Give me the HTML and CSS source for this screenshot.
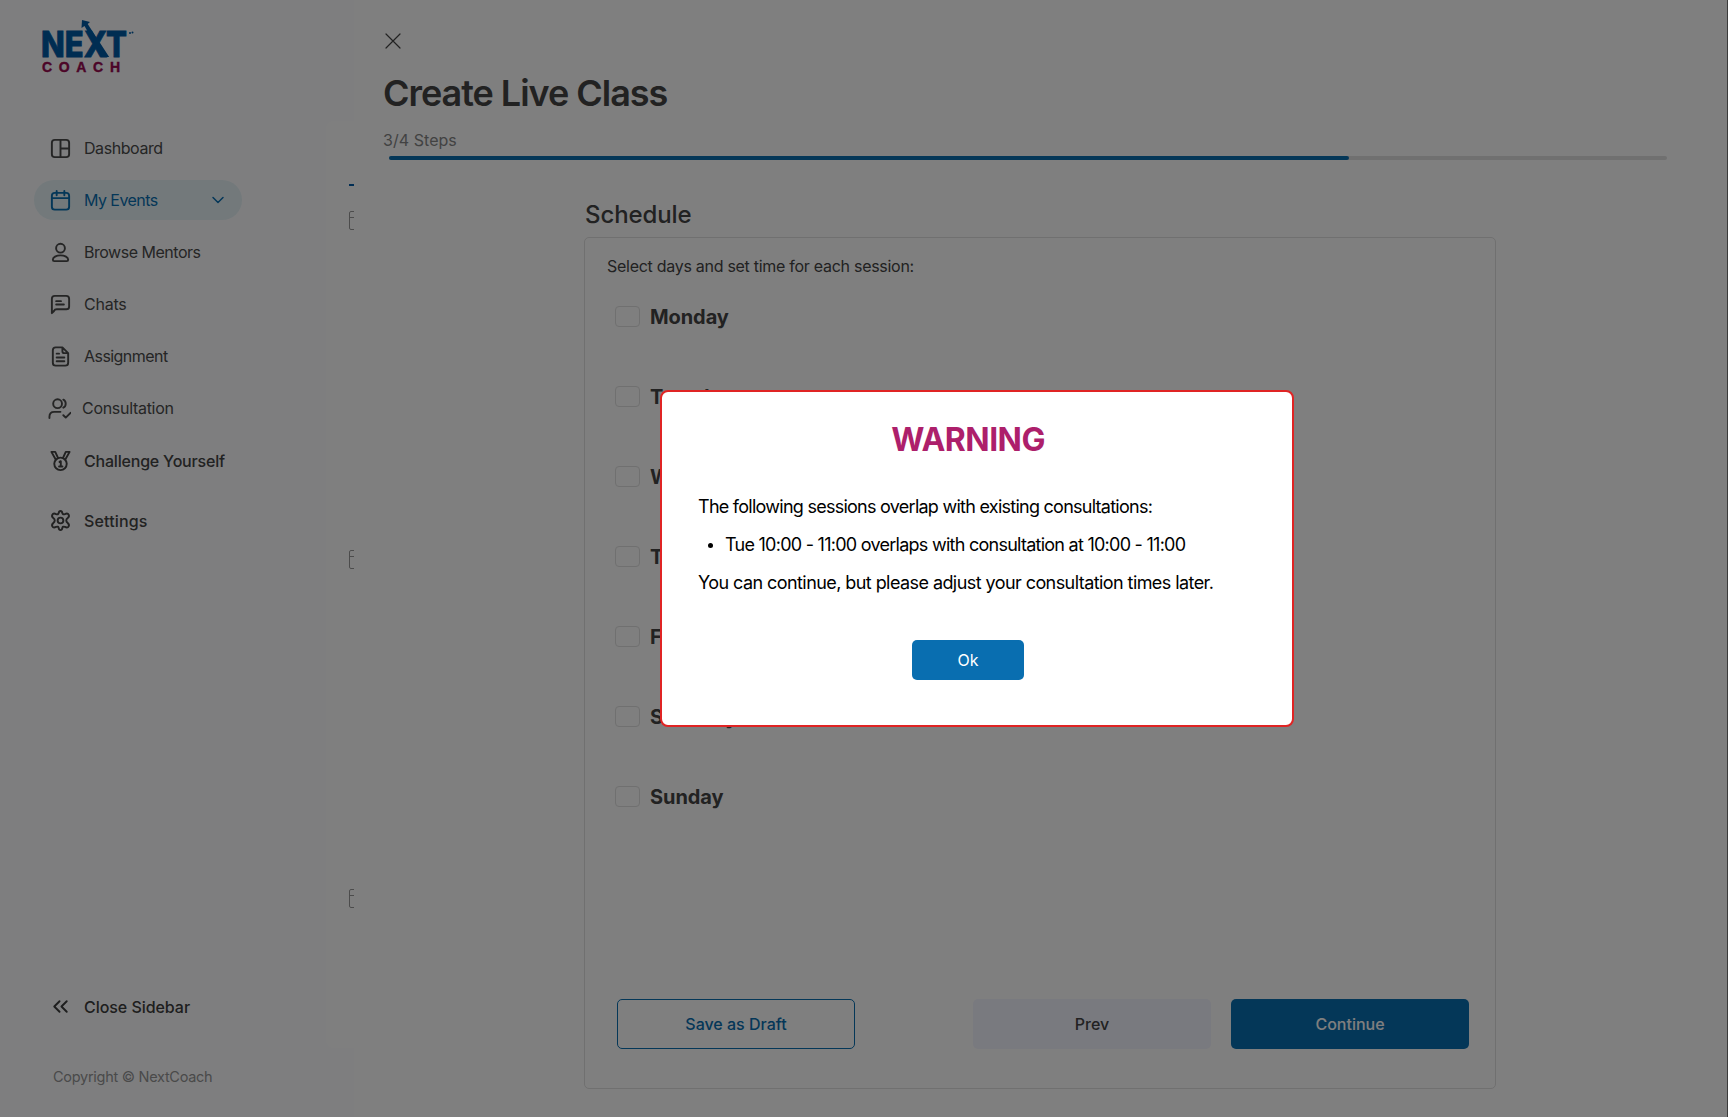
FILE: index.html
```html
<!DOCTYPE html>
<html lang="en">
<head>
<meta charset="utf-8">
<title>Create Live Class</title>
<link rel="stylesheet" href="styles.css">
</head>
<body>
<div class="app">
  <aside class="sidebar">
    <svg class="logo" width="100" height="60" viewBox="0 0 100 60">
      <text class="logo-next" x="0" y="42" textLength="86" lengthAdjust="spacingAndGlyphs">NEXT</text>
      <path class="logo-arrow" d="M41 5l8 2-2.300 2 21.500 33h-7L43.500 11 40.500 13z"/>
      <circle class="logo-arrow" cx="89" cy="18" r="1"/><circle class="logo-arrow" cx="91.500" cy="17.500" r="1"/>
      <text class="logo-coach" x="1" y="57" textLength="78">COACH</text>
    </svg>
    <nav class="nav">
      <a class="item"><svg class="icon" viewBox="0 0 24 24"><rect x="3" y="3" width="18" height="18" rx="3"/><path d="M12 3v18M12 12h9"/></svg><span class="label t-dashboard">Dashboard</span></a>
      <a class="item active"><svg class="icon" viewBox="0 0 24 24"><rect x="3" y="4" width="18" height="17.500" rx="3"/><path d="M3 9.500h18M8 2v4.500M16 2v4.500"/></svg><span class="label t-events">My Events</span><svg class="chevron" viewBox="0 0 14 14"><path d="M2 4.500l5 5 5-5"/></svg></a>
      <a class="item"><svg class="icon" viewBox="0 0 24 24"><circle cx="12" cy="7.500" r="4.600"/><path d="M4 19.500c0-2.500 3.500-4.500 8-4.500s8 2 8 4.500c0 1-.5 1.500-1.500 1.500h-13c-1 0-1.500-.5-1.500-1.500z"/></svg><span class="label t-mentors">Browse Mentors</span></a>
      <a class="item"><svg class="icon" viewBox="0 0 24 24"><path d="M3 21V6q0-3 3-3h12q3 0 3 3v8q0 3-3 3H8q-2 0-3 2zM7.500 8.500h5M7.500 12h8"/></svg><span class="label t-chats">Chats</span></a>
      <a class="item"><svg class="icon" viewBox="0 0 24 24"><path d="M14 2.500H7q-3 0-3 3v13q0 3 3 3h10q3 0 3-3V8.500zM14 2.500v4q0 2 2 2h4M8 9h2.500M8 13h8M8 17h8"/></svg><span class="label t-assign">Assignment</span></a>
      <a class="item consult"><svg class="icon" viewBox="0 0 24 24"><circle cx="10" cy="7" r="4.600"/><path d="M1.500 22v-1.500c0-3 2-5 5-5H13M16 2.800c3.300 1.500 3.300 6.800 0 8.300M16 19l2.500 2.500 5-5"/></svg><span class="label t-consult">Consultation</span></a>
      <a class="item large challenge"><svg class="icon" viewBox="0 0 24 24"><circle cx="12" cy="15.500" r="6.500"/><path d="M9.500 9.500L6.500 3H2.500l4.500 8M14.500 9.500l3-6.500h4L17 11M11 13.500l1.300-.8v5.600M10.500 18.300h3.500"/></svg><span class="t-challenge">Challenge Yourself</span></a>
      <a class="item large settings"><svg class="icon" viewBox="0 0 24 24"><circle cx="12" cy="12" r="3"/><path d="M10 4.500q.4-2.500 2-2.500t2 2.500q.4 1.500 2.500.9 3-1.400 4 .5t-1 3.600q-1.500 1.200-1.500 2.500t1.500 2.500q2 1.700 1 3.600t-4 .5q-2.100-.6-2.500.9-.4 2.500-2 2.500t-2-2.500q-.4-1.500-2.500-.9-3 1.400-4-.5t1-3.600Q6 13.300 6 12T4.500 9.500q-2-1.700-1-3.600t4-.5q2.100.6 2.500-.9z"/></svg><span class="t-settings">Settings</span></a>
    </nav>
    <a class="item large close"><svg class="icon" viewBox="0 0 24 24"><path d="M11 6.500L5.500 12l5.500 5.500M18.500 6.500L13 12l5.500 5.500"/></svg><span class="t-close">Close Sidebar</span></a>
    <p class="copyright">Copyright © NextCoach</p>
    <div class="behind">
      <i class="tab"></i><i class="stub"></i><i class="stub"></i><i class="stub"></i>
    </div>
  </aside>
  <main class="main">
    <svg class="dismiss" viewBox="0 0 16 16"><path d="M1 1l14 14M15 1L1 15"/></svg>
    <h1 class="title">Create Live Class</h1>
    <p class="steps">3/4 Steps</p>
    <div class="progress"><div class="bar"></div></div>
    <section class="schedule">
      <h2 class="heading">Schedule</h2>
      <div class="card">
        <p class="prompt">Select days and set time for each session:</p>
        <div class="days">
          <label class="day"><i class="box"></i>Monday</label>
          <label class="day"><i class="box"></i>Tuesday</label>
          <label class="day"><i class="box"></i>Wednesday</label>
          <label class="day"><i class="box"></i>Thursday</label>
          <label class="day"><i class="box"></i>Friday</label>
          <label class="day"><i class="box"></i>Saturday</label>
          <label class="day"><i class="box"></i>Sunday</label>
        </div>
        <div class="actions">
          <button class="btn outline">Save as Draft</button>
          <button class="btn soft">Prev</button>
          <button class="btn primary">Continue</button>
        </div>
      </div>
    </section>
  </main>
</div>
<div class="overlay">
  <div class="modal">
    <h3 class="warning">WARNING</h3>
    <p class="line">The following sessions overlap with existing consultations:</p>
    <p class="line bullet"><i class="dot"></i><span>Tue 10:00 - 11:00 overlaps with consultation at 10:00 - 11:00</span></p>
    <p class="line last">You can continue, but please adjust your consultation times later.</p>
    <button class="ok">Ok</button>
  </div>
</div>
</body>
</html>
```
FILE: styles.css
```css
* { box-sizing: border-box; }
body { margin: 0; font-family: Inter, "Liberation Sans", sans-serif; color: #444; overflow: hidden; }
h1, h2, h3, p { margin: 0; white-space: nowrap; }
button { font: inherit; padding: 0; border: 0; }
svg { display: block; fill: none; flex: none; }

.app { display: flex; width: 1728px; height: 1117px; background: #fff; }

.sidebar { position: relative; width: 354px; padding: 15px 0 0 34px; background: #fcfdff; display: flex; flex-direction: column; overflow: hidden; }
.logo { margin-left: 7px; }
.logo-next { font: 800 36px Inter, sans-serif; fill: #005aa5; stroke: #005aa5; stroke-width: .8; }
.logo-coach { font: 700 14px "Liberation Sans", Inter, sans-serif; fill: #980a50; stroke: #980a50; stroke-width: .4; }
.logo-arrow { fill: #005aa5; }
.nav { margin-top: 53px; display: flex; flex-direction: column; gap: 12px; }
.item { display: flex; align-items: center; width: 208px; height: 40px; padding-left: 15px; gap: 12px; font-size: 16px; line-height: 24px; color: #4b4b4b; border-radius: 20px; white-space: nowrap; }
.icon { width: 23px; height: 23px; stroke: currentColor; stroke-width: 2; stroke-linecap: round; stroke-linejoin: round; }
.label { padding-bottom: 1px; }
.active { background: #e6f3f7; color: #096eb0; }
.chevron { width: 14px; height: 14px; margin: 0 17px 0 auto; stroke: currentColor; stroke-width: 1.5; stroke-linecap: round; stroke-linejoin: round; }
.t-dashboard { letter-spacing: -.43px; }
.t-events { letter-spacing: -.55px; }
.t-mentors { letter-spacing: -.48px; }
.t-chats { letter-spacing: -.25px; }
.t-assign { letter-spacing: -.55px; }
.t-consult { letter-spacing: -.3px; }
.t-challenge { letter-spacing: -.2px; }
.t-settings { letter-spacing: .15px; }
.t-close { letter-spacing: -.05px; }
.large { font-weight: 500; color: #444; }
.large .icon { margin-bottom: 2px; }
.consult { padding-left: 14px; gap: 11px; }
.challenge { margin-top: 1px; }
.settings { margin-top: 8px; }
.close { margin-top: 446px; color: #3c3c3c; }
.copyright { margin: 40px 0 0 19px; font-size: 14.5px; line-height: 20px; letter-spacing: -.28px; color: #949494; }

/* Page underneath, peeking out beside the drawer */
.behind { position: absolute; left: 326px; top: 121px; width: 28px; height: 927px; padding-left: 23px; background: #fff; border-radius: 8px 0 0 8px; overflow: hidden; }
.tab { display: block; height: 2px; margin-top: 63px; background: #005ba8; }
.stub { display: block; width: 12px; height: 19px; margin: 25px 0 320px; border: 1px solid #999; border-radius: 2px; background: linear-gradient(#999, #999) 0 5px / 100% 1px no-repeat; }
.stub + .stub { margin-top: 0; }

.main { width: 1374px; padding: 33px 61px 0 29px; border-right: 1px solid #777; background: #fff; }
.dismiss { width: 16px; height: 16px; margin-left: 2px; stroke: #444; stroke-width: 1.2; stroke-linecap: round; }
.title { margin-top: 22px; font-size: 36px; line-height: 44px; font-weight: 600; letter-spacing: -1.03px; }
.steps { margin-top: 15px; font-size: 16px; line-height: 20px; letter-spacing: .05px; color: #858585; }
.progress { width: 1278px; height: 4px; margin: 6px 0 0 6px; border-radius: 2px; background: #e0e0e0; }
.bar { width: 960px; height: 4px; border-radius: 2px; background: #096eb0; }
.schedule { width: 912px; margin: 39px 0 0 201px; }
.heading { padding-left: 1px; font-size: 24px; line-height: 32px; font-weight: 500; letter-spacing: -.1px; }
.card { height: 852px; margin-top: 6px; padding: 16px 26px 0 22px; border: 1px solid #e0e0e0; border-radius: 5px; }
.prompt { font-size: 16px; line-height: 24px; letter-spacing: -.28px; }
.days { display: flex; flex-direction: column; gap: 40px; margin: 19px 0 0 8px; }
.day { display: flex; align-items: center; gap: 10px; height: 40px; font-size: 20px; font-weight: 700; letter-spacing: -.08px; }
.box { width: 25px; height: 21px; margin-bottom: 1px; border: 1px solid #e0e0e0; border-radius: 4px; }
.actions { display: flex; margin: 182px 0 0 10px; }
.btn { width: 238px; height: 50px; border-radius: 5px; font-size: 16px; font-weight: 500; color: #444; }
.outline { border: 1px solid #096eb0; background: #fff; color: #096eb0; }
.soft { margin: 0 20px 0 auto; background: #f3f4fe; }
.primary { background: #096eb0; color: #fff; }

.overlay { position: fixed; inset: 0; padding: 390px 0 0 660px; background: rgba(0, 0, 0, .5); }
.modal { display: flex; flex-direction: column; width: 634px; height: 337px; padding: 28px 36px 0; border: 2px solid #e02424; border-radius: 8px; background: #fff; color: #000; }
.warning { align-self: center; margin: 0 18px 28px 0; font-size: 32px; line-height: 40px; font-weight: 700; letter-spacing: -.55px; color: #ad1f6b; }
.line { font-size: 18px; line-height: 38px; height: 38px; letter-spacing: -.74px; }
.last { letter-spacing: -.57px; }
.bullet { display: flex; align-items: center; gap: 12px; padding-left: 10px; }
.dot { width: 5px; height: 5px; border-radius: 50%; background: #000; }
.ok { align-self: center; width: 112px; height: 40px; margin: 38px 18px 0 0; border-radius: 5px; background: #096eb0; color: #fff; font-size: 16px; }
```
